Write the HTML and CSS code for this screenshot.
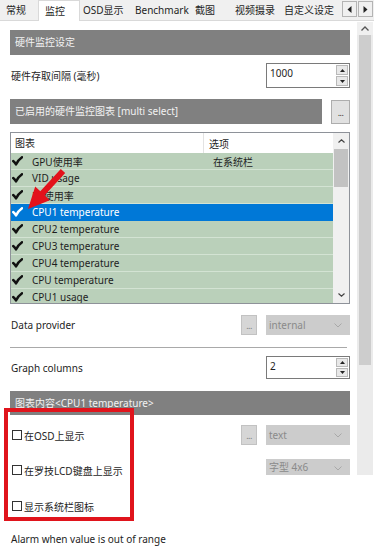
FILE: index.html
```html
<!DOCTYPE html>
<html lang="zh-CN">
<head>
<meta charset="utf-8">
<title>监控</title>
<link rel="stylesheet" href="styles.css">
</head>
<body>
<div class="window">
  <div class="tabbar">
    <div class="tabs">
      <span class="tab">常规</span>
      <span class="tab active">监控</span>
      <span class="tab">OSD显示</span>
      <span class="tab">Benchmark</span>
      <span class="tab">截图</span>
      <span class="tab">视频摄录</span>
      <span class="tab">自定义设定</span>
    </div>
    <div class="tabscroll">
      <span class="sbtn"><svg width="5" height="7" viewBox="0 0 5 7"><path d="M4.5 0 L0.5 3.5 L4.5 7 Z" fill="#222"/></svg></span>
      <span class="sbtn"><svg width="5" height="7" viewBox="0 0 5 7"><path d="M0.5 0 L4.5 3.5 L0.5 7 Z" fill="#222"/></svg></span>
    </div>
  </div>

  <div class="main">
    <div class="content">
      <div class="header h1">硬件监控设定</div>

      <div class="row r-interval">
        <span class="label">硬件存取间隔 (毫秒)</span>
        <div class="spin tall">
          <span class="spin-val">1000</span>
          <span class="spin-btns">
            <span class="sb up"><svg width="5" height="3" viewBox="0 0 5 3"><path d="M0 3 L2.5 0 L5 3 Z" fill="#222"/></svg></span>
            <span class="sb down"><svg width="5" height="3" viewBox="0 0 5 3"><path d="M0 0 L2.5 3 L5 0 Z" fill="#222"/></svg></span>
          </span>
        </div>
      </div>

      <div class="hrow">
        <div class="header h2">已启用的硬件监控图表 [multi select]</div>
        <span class="dots big">...</span>
      </div>

      <div class="list">
        <div class="list-main">
          <div class="lh">
            <span class="c1">图表</span>
            <span class="c2">选项</span>
          </div>
          <div class="li"><span class="chk"><svg width="11" height="10" viewBox="0 0 11 10"><path d="M1.2 5 Q3 6.5 4 8.4 Q6 4 10 1.2" fill="none" stroke="currentColor" stroke-width="2.4" stroke-linejoin="round" stroke-linecap="round"/></svg></span><span class="c1">GPU使用率</span><span class="c2">在系统栏</span></div>
          <div class="li"><span class="chk"><svg width="11" height="10" viewBox="0 0 11 10"><path d="M1.2 5 Q3 6.5 4 8.4 Q6 4 10 1.2" fill="none" stroke="currentColor" stroke-width="2.4" stroke-linejoin="round" stroke-linecap="round"/></svg></span><span class="c1">VID usage</span><span class="c2"></span></div>
          <div class="li"><span class="chk"><svg width="11" height="10" viewBox="0 0 11 10"><path d="M1.2 5 Q3 6.5 4 8.4 Q6 4 10 1.2" fill="none" stroke="currentColor" stroke-width="2.4" stroke-linejoin="round" stroke-linecap="round"/></svg></span><span class="c1">FB使用率</span><span class="c2"></span></div>
          <div class="li sel"><span class="chk"><svg width="11" height="10" viewBox="0 0 11 10"><path d="M1.2 5 Q3 6.5 4 8.4 Q6 4 10 1.2" fill="none" stroke="currentColor" stroke-width="2.4" stroke-linejoin="round" stroke-linecap="round"/></svg></span><span class="c1">CPU1 temperature</span><span class="c2"></span></div>
          <div class="li"><span class="chk"><svg width="11" height="10" viewBox="0 0 11 10"><path d="M1.2 5 Q3 6.5 4 8.4 Q6 4 10 1.2" fill="none" stroke="currentColor" stroke-width="2.4" stroke-linejoin="round" stroke-linecap="round"/></svg></span><span class="c1">CPU2 temperature</span><span class="c2"></span></div>
          <div class="li"><span class="chk"><svg width="11" height="10" viewBox="0 0 11 10"><path d="M1.2 5 Q3 6.5 4 8.4 Q6 4 10 1.2" fill="none" stroke="currentColor" stroke-width="2.4" stroke-linejoin="round" stroke-linecap="round"/></svg></span><span class="c1">CPU3 temperature</span><span class="c2"></span></div>
          <div class="li"><span class="chk"><svg width="11" height="10" viewBox="0 0 11 10"><path d="M1.2 5 Q3 6.5 4 8.4 Q6 4 10 1.2" fill="none" stroke="currentColor" stroke-width="2.4" stroke-linejoin="round" stroke-linecap="round"/></svg></span><span class="c1">CPU4 temperature</span><span class="c2"></span></div>
          <div class="li"><span class="chk"><svg width="11" height="10" viewBox="0 0 11 10"><path d="M1.2 5 Q3 6.5 4 8.4 Q6 4 10 1.2" fill="none" stroke="currentColor" stroke-width="2.4" stroke-linejoin="round" stroke-linecap="round"/></svg></span><span class="c1">CPU temperature</span><span class="c2"></span></div>
          <div class="li"><span class="chk"><svg width="11" height="10" viewBox="0 0 11 10"><path d="M1.2 5 Q3 6.5 4 8.4 Q6 4 10 1.2" fill="none" stroke="currentColor" stroke-width="2.4" stroke-linejoin="round" stroke-linecap="round"/></svg></span><span class="c1">CPU1 usage</span><span class="c2"></span></div>
        </div>
        <div class="list-sb">
          <span class="lsb-arrow"><svg width="7" height="4" viewBox="0 0 7 4"><path d="M0.5 3.5 L3.5 0.8 L6.5 3.5" fill="none" stroke="#444" stroke-width="1.2"/></svg></span>
          <span class="lsb-thumb"></span>
          <span class="lsb-track"></span>
          <span class="lsb-arrow"><svg width="7" height="4" viewBox="0 0 7 4"><path d="M0.5 0.5 L3.5 3.2 L6.5 0.5" fill="none" stroke="#444" stroke-width="1.2"/></svg></span>
        </div>
      </div>

      <div class="row r-dp">
        <span class="label">Data provider</span>
        <span class="dots dis">...</span>
        <span class="dd">internal<svg class="chev" width="8" height="5" viewBox="0 0 8 5"><path d="M0.5 0.5 L4 4 L7.5 0.5" fill="none" stroke="#a8a8a8" stroke-width="1"/></svg></span>
      </div>

      <div class="sep"></div>

      <div class="row r-gc">
        <span class="label">Graph columns</span>
        <div class="spin">
          <span class="spin-val">2</span>
          <span class="spin-btns">
            <span class="sb up"><svg width="5" height="3" viewBox="0 0 5 3"><path d="M0 3 L2.5 0 L5 3 Z" fill="#222"/></svg></span>
            <span class="sb down"><svg width="5" height="3" viewBox="0 0 5 3"><path d="M0 0 L2.5 3 L5 0 Z" fill="#222"/></svg></span>
          </span>
        </div>
      </div>

      <div class="header h3">图表内容&lt;CPU1 temperature&gt;</div>

      <div class="row r-cb1">
        <label class="cb"><span class="box"></span>在OSD上显示</label>
        <span class="dots dis">...</span>
        <span class="dd">text<svg class="chev" width="8" height="5" viewBox="0 0 8 5"><path d="M0.5 0.5 L4 4 L7.5 0.5" fill="none" stroke="#a8a8a8" stroke-width="1"/></svg></span>
      </div>

      <div class="row r-cb2">
        <label class="cb"><span class="box"></span>在罗技LCD键盘上显示</label>
        <span class="dd short">字型 4x6<svg class="chev" width="8" height="5" viewBox="0 0 8 5"><path d="M0.5 0.5 L4 4 L7.5 0.5" fill="none" stroke="#a8a8a8" stroke-width="1"/></svg></span>
      </div>

      <div class="row r-cb3">
        <label class="cb"><span class="box"></span>显示系统栏图标</label>
      </div>

      <div class="row r-alarm">
        <span class="label">Alarm when value is out of range</span>
      </div>
    </div>

    <div class="vscroll">
      <span class="vs-arrow"><svg width="8" height="5" viewBox="0 0 8 5"><path d="M0.5 4.5 L4 1 L7.5 4.5" fill="none" stroke="#555" stroke-width="1.3"/></svg></span>
      <span class="vs-thumb"></span>
      <span class="vs-track"></span>
    </div>
  </div>

  <svg class="arrow" width="374" height="550" viewBox="0 0 374 550">
    <polygon points="65.2,173 44.7,195.3 49.8,200.2 28,209 35.2,186.6 40.3,191.3 60.8,169" fill="#e3121b"/>
  </svg>
  <div class="redbox"></div>
</div>
</body>
</html>
```

FILE: styles.css
```css
* { box-sizing: border-box; }

body {
  margin: 0;
  background: #ffffff;
  font-family: "Noto Sans", "Noto Sans CJK SC", sans-serif;
  font-size: 10px;
  color: #1e1e1e;
}

.window {
  position: relative;
  width: 374px;
  height: 550px;
  overflow: hidden;
  background: #ffffff;
}

/* ---------- tab bar ---------- */
.tabbar {
  height: 21px;
  background: #f0f0f0;
  border-bottom: 1px solid #d9d9d9;
  display: flex;
  justify-content: space-between;
}

.tabs {
  display: flex;
  height: 20px;
}

.tab {
  height: 20px;
  line-height: 20px;
  padding-left: 5px;
  white-space: nowrap;
  color: #1e1e1e;
}
.tab:nth-child(1) { width: 40px; padding-left: 6px; }
.tab:nth-child(2) { width: 38px; }
.tab:nth-child(3) { width: 52px; }
.tab:nth-child(4) { width: 60px; }
.tab:nth-child(5) { width: 40px; }
.tab:nth-child(6) { width: 49px; }
.tab:nth-child(7) { width: 59px; }

.tab.active {
  background: #ffffff;
  border: 1px solid #d9d9d9;
  border-bottom: none;
  height: 21px;
  width: 42px;
  margin: 0 -2px;
  padding-left: 6px;
  position: relative;
  z-index: 1;
}

.tabscroll {
  display: flex;
  gap: 1px;
  padding: 1px 1px 0 0;
}

.sbtn {
  width: 15px;
  height: 16px;
  border: 1px solid #b4b4b4;
  background: #f0f0f0;
  display: flex;
  align-items: center;
  justify-content: center;
}

/* ---------- main area ---------- */
.main {
  display: flex;
  align-items: flex-start;
  padding-left: 10px;
}

.content {
  width: 340px;
  display: flex;
  flex-direction: column;
}

.header {
  background: #808080;
  color: #f2f2f2;
  height: 25px;
  line-height: 25px;
  padding-left: 5px;
  white-space: nowrap;
}
.h1 { margin-top: 9px; }
.h3 { margin-top: 12px; height: 24px; line-height: 24px; }

.row {
  display: flex;
  align-items: center;
}
.label { flex: 1; white-space: nowrap; padding-left: 1px; }

.r-interval { margin-top: 8px; height: 25px; }
.r-dp { margin-top: 11px; height: 20px; }
.r-gc { margin-top: 8px; height: 23px; }
.r-cb1 { margin-top: 9px; height: 22px; }
.r-cb2 { margin-top: 13px; height: 22px; align-items: flex-start; }
.r-cb2 .cb { align-self: center; }
.r-cb3 { margin-top: 14px; height: 22px; }
.r-alarm { margin-top: 11px; height: 22px; }

/* spin box */
.spin {
  width: 84px;
  height: 23px;
  border: 1px solid #7a7a7a;
  background: #ffffff;
  display: flex;
  justify-content: space-between;
  padding: 1px;
}
.spin.tall { height: 25px; }
.spin-val { padding: 2px 0 0 2px; line-height: 13px; }
.spin-btns {
  width: 12px;
  display: flex;
  flex-direction: column;
  gap: 1px;
}
.sb {
  flex: 1;
  background: #e8e8e8;
  border: 1px solid #b9b9b9;
  display: flex;
  align-items: center;
  justify-content: center;
}

/* header with button */
.hrow {
  margin-top: 11px;
  display: flex;
  justify-content: space-between;
  height: 25px;
}
.h2 { width: 312px; }

.dots {
  display: flex;
  align-items: center;
  justify-content: center;
  background: #e1e1e1;
  border: 1px solid #adadad;
  color: #333;
  font-size: 9px;
  letter-spacing: -0.5px;
}
.dots.big { width: 19px; height: 24px; margin-top: 1px; }
.dots.dis {
  width: 16px;
  height: 20px;
  background: #d6d6d6;
  border-color: #c2c2c2;
  color: #7d7d7d;
  margin-right: 9px;
}

.dd {
  width: 84px;
  height: 20px;
  background: #cccccc;
  color: #8a8a8a;
  display: flex;
  align-items: center;
  justify-content: space-between;
  padding: 0 8px 0 3px;
  white-space: nowrap;
}
.dd.short {
  height: 16px;
  line-height: 14px;
  align-items: flex-end;
  padding-bottom: 1px;
}
.chev { flex: none; }
.dd.short .chev { margin-bottom: 3px; }

.sep {
  margin-top: 12px;
  height: 1px;
  width: 337px;
  background: #a9a9a9;
}

/* ---------- list ---------- */
.list {
  margin-top: 8px;
  height: 172px;
  border: 1px solid #8e9299;
  display: flex;
  overflow: hidden;
  background: #ffffff;
}
.list-main {
  flex: 1;
  overflow: hidden;
}
.lh {
  height: 20px;
  display: flex;
  align-items: center;
  background: #ffffff;
}
.lh .c1 {
  width: 193px;
  padding-left: 4px;
  height: 20px;
  line-height: 20px;
  border-right: 1px solid #e3e3e3;
}
.lh .c2 { padding-left: 5px; }

.li {
  height: 17px;
  display: flex;
  align-items: center;
  background: #bad0ba;
  border-bottom: 1px solid #d3e3d3;
  color: #1e1e1e;
  white-space: nowrap;
}
.li .chk {
  width: 21px;
  padding-left: 1px;
  display: flex;
  align-items: center;
  color: #111;
}
.li .c1 { width: 181px; }
.li .c2 { padding-left: 0; }
.li.sel {
  background: #0078d7;
  border-bottom-color: #0078d7;
  color: #ffffff;
}
.li.sel .chk { color: #ffffff; }

.list-sb {
  width: 16px;
  background: #f0f0f0;
  display: flex;
  flex-direction: column;
}
.lsb-arrow {
  height: 16px;
  display: flex;
  align-items: center;
  justify-content: center;
}
.lsb-thumb {
  height: 38px;
  margin: 0 1px;
  background: #c2c2c2;
}
.lsb-track { flex: 1; }

/* checkbox */
.cb {
  flex: 1;
  display: flex;
  align-items: center;
  white-space: nowrap;
  padding-left: 2px;
}
.box {
  width: 10px;
  height: 10px;
  border: 1px solid #333;
  background: #fff;
  margin-right: 2px;
}

/* ---------- main vertical scrollbar ---------- */
.vscroll {
  margin-left: 7px;
  margin-top: 1px;
  width: 16px;
  height: 453px;
  background: #ebebeb;
  display: flex;
  flex-direction: column;
}
.vs-arrow {
  height: 13px;
  display: flex;
  align-items: center;
  justify-content: center;
  background: #f0f0f0;
}
.vs-thumb {
  height: 330px;
  margin: 0 2px;
  background: #cdcdcd;
}
.vs-track { flex: 1; }

/* ---------- annotations ---------- */
.arrow {
  position: absolute;
  left: 0;
  top: 0;
  pointer-events: none;
}
.redbox {
  position: absolute;
  left: 4px;
  top: 408px;
  width: 130px;
  height: 113px;
  border: 4px solid #e0141c;
  pointer-events: none;
}
```
